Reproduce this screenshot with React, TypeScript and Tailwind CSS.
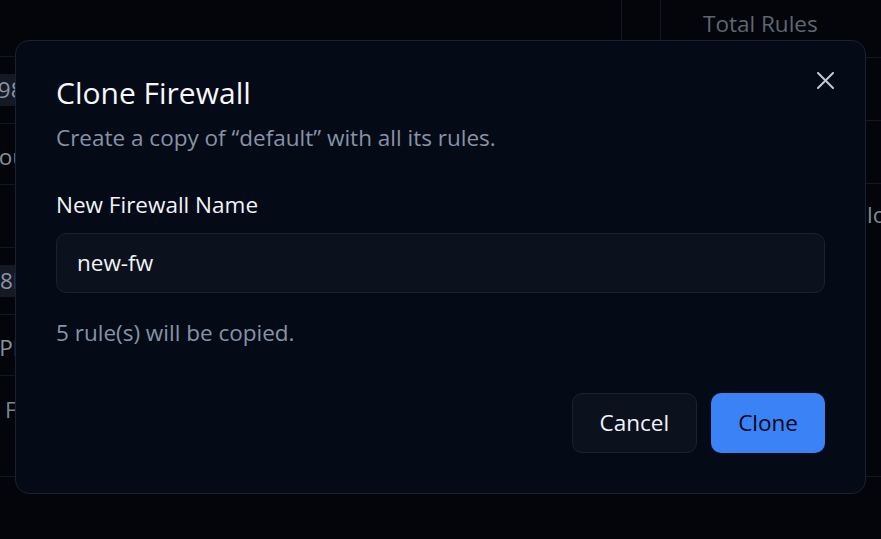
const leftRows = [
  { h: "h-[67px]", kind: "chip", text: "192.168.1.98", shift: "-ml-[122px]" },
  { h: "h-[61px]", kind: "text", text: "Inbound", shift: "-ml-[35px]" },
  { h: "h-[63px]", kind: "text", text: "", shift: "" },
  { h: "h-[67px]", kind: "chip", text: "vpc-8lk2", shift: "-ml-[55px]" },
  { h: "h-[61px]", kind: "text", text: "10:42 PM", shift: "-ml-[64px]" },
  { h: "h-[101px]", kind: "top", text: "F", shift: "ml-[5px]" },
];

function Background() {
  return (
    <div className="flex h-full w-full overflow-hidden text-[22.5px] font-['Open_Sans',sans-serif]">
      {/* Left table */}
      <div className="w-[621px] shrink-0">
        <div className="h-[57px] border-b border-[#121722]" />
        {leftRows.map((row, i) => (
          <div
            key={i}
            className={`${row.h} flex items-center border-b border-[#121722]`}
          >
            {row.kind === "chip" ? (
              <span
                className={`${row.shift} whitespace-nowrap rounded-md bg-[#141923] px-3 py-[3px] leading-[26px] text-[#8c95a3]`}
              >
                {row.text}
              </span>
            ) : row.kind === "top" ? (
              <span className={`${row.shift} self-start pt-[17px] text-[#7d8490]`}>
                {row.text}
              </span>
            ) : (
              <span className={`${row.shift} whitespace-nowrap pt-[6px] text-[#8a8f98]`}>
                {row.text}
              </span>
            )}
          </div>
        ))}
      </div>

      {/* Middle column */}
      <div className="h-[57px] w-[40px] shrink-0 border-x border-[#121722]" />

      {/* Right panel */}
      <div className="flex-1">
        <div className="flex h-[58px] items-start border-b border-[#121722] pl-[42px] pt-[7px] font-medium text-[#5f6673]">
          Total Rules
        </div>
        <div className="h-[63px] border-b border-[#121722]" />
        <div className="h-[63px] border-b border-[#121722]" />
        <div className="h-[293px] border-b border-[#121722] pl-[206px] pt-[14px] text-[#7f8896]">
          lo
        </div>
      </div>
    </div>
  );
}

function CloseIcon() {
  return (
    <svg width="17" height="17" viewBox="0 0 17 17" fill="none">
      <path
        d="M1 1L16 16M16 1L1 16"
        stroke="#c3c9d2"
        strokeWidth="2"
        strokeLinecap="round"
      />
    </svg>
  );
}

export default function App() {
  return (
    <div className="relative h-[539px] w-full overflow-hidden bg-[#03050b] font-['Open_Sans',sans-serif]">
      <Background />

      {/* Dialog */}
      <div className="absolute inset-0 flex justify-center pt-[40px]">
        <div className="relative flex h-[454px] w-[851px] flex-col rounded-[14px] border border-[#1a2131] bg-[#050a17] px-[40px] pb-[40px] pt-[34px]">
          <button className="absolute right-[31px] top-[31px] p-0">
            <CloseIcon />
          </button>

          <h2 className="text-[30px] font-medium leading-[36px] text-[#f5f7fa]">
            Clone Firewall
          </h2>
          <p className="mt-[11px] text-[22.5px] leading-[32px] text-[#8793a6]">
            Create a copy of “default” with all its rules.
          </p>

          <label className="mt-[35px] text-[22.5px] font-medium leading-[32px] text-[#f1f4f8]">
            New Firewall Name
          </label>
          <div className="mt-[12px] flex h-[60px] items-center rounded-[10px] border border-[#1a2131] bg-[#0b111d] pl-[20px] text-[22.5px] text-[#f1f4f8]">
            new-fw
          </div>

          <p className="mt-[24px] text-[22.5px] leading-[32px] text-[#8793a6]">
            5 rule(s) will be copied.
          </p>

          <div className="mt-[44px] flex justify-end gap-[14px]">
            <button className="h-[60px] rounded-[10px] border border-[#1a2131] bg-[#0b111d] px-[27px] text-[22.5px] font-medium text-[#f1f4f8]">
              Cancel
            </button>
            <button className="h-[60px] rounded-[10px] bg-[#3b82f6] px-[27px] text-[22.5px] font-medium text-[#030712]">
              Clone
            </button>
          </div>
        </div>
      </div>
    </div>
  );
}
